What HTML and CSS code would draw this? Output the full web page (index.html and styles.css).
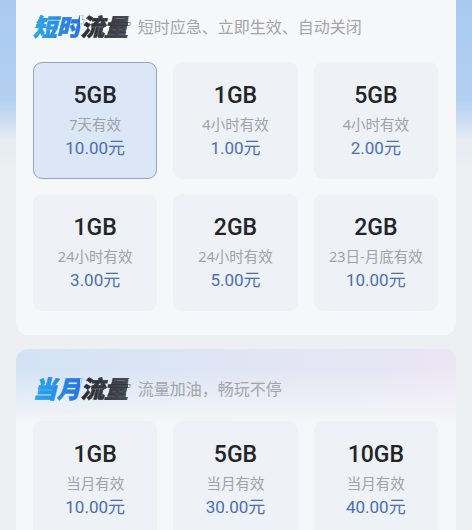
FILE: index.html
```html
<!DOCTYPE html>
<html>
	<head>
		<meta charset="utf-8">
		<meta name="viewport" content="width=device-width, initial-scale=1.0">
		<title>流量包</title>
		<link rel="stylesheet" href="styles.css">
	</head>
	<body>
		<div class="page">
			<section class="panel panel-short">
				<div class="panel-head">
					<h2 class="panel-title"><span class="accent">短时</span><span class="dark">流量</span></h2>
					<p class="panel-desc">短时应急、立即生效、自动关闭</p>
				</div>
				<div class="grid">
					<div class="tile selected">
						<div class="size">5GB</div>
						<div class="valid">7天有效</div>
						<div class="price">10.00元</div>
					</div>
					<div class="tile">
						<div class="size">1GB</div>
						<div class="valid">4小时有效</div>
						<div class="price">1.00元</div>
					</div>
					<div class="tile">
						<div class="size">5GB</div>
						<div class="valid">4小时有效</div>
						<div class="price">2.00元</div>
					</div>
					<div class="tile">
						<div class="size">1GB</div>
						<div class="valid">24小时有效</div>
						<div class="price">3.00元</div>
					</div>
					<div class="tile">
						<div class="size">2GB</div>
						<div class="valid">24小时有效</div>
						<div class="price">5.00元</div>
					</div>
					<div class="tile">
						<div class="size">2GB</div>
						<div class="valid">23日-月底有效</div>
						<div class="price">10.00元</div>
					</div>
				</div>
			</section>

			<section class="panel panel-month">
				<div class="panel-head">
					<h2 class="panel-title"><span class="accent">当月</span><span class="dark">流量</span></h2>
					<p class="panel-desc">流量加油，畅玩不停</p>
				</div>
				<div class="grid">
					<div class="tile">
						<div class="size">1GB</div>
						<div class="valid">当月有效</div>
						<div class="price">10.00元</div>
					</div>
					<div class="tile">
						<div class="size">5GB</div>
						<div class="valid">当月有效</div>
						<div class="price">30.00元</div>
					</div>
					<div class="tile">
						<div class="size">10GB</div>
						<div class="valid">当月有效</div>
						<div class="price">40.00元</div>
					</div>
				</div>
			</section>
		</div>
	</body>
</html>
```

FILE: styles.css
```css
html, body {
	margin: 0;
	padding: 0;
}
body {
	background: linear-gradient(180deg, #a9c9f0 0px, #b3d0f2 100px, #e6ebf3 140px, #eeeff2 170px, #eeeff2 100%);
	font-family: "Noto Sans", "Noto Sans CJK SC", sans-serif;
	overflow: hidden;
}

.page {
	display: flex;
	flex-direction: column;
	gap: 14px;
	padding: 0 16px;
	margin-top: -12px;
}

.panel {
	border-radius: 12px;
	background: #f6f7f8;
	padding: 24px 18px 24px 17px;
}
.panel-month {
	padding-top: 25px;
	background:
		linear-gradient(180deg, rgba(246,247,248,0) 0px, rgba(246,247,248,0) 20px, #f5f6f8 75px),
		linear-gradient(90deg, #d2e3f5 0%, #e0e5f4 50%, #ebe6f4 100%);
}

.panel-head {
	display: flex;
	align-items: center;
	gap: 10px;
	height: 30px;
	margin-bottom: 20px;
}
.panel-month .panel-head {
	margin-bottom: 17px;
}
.panel-title {
	margin: 0;
	font-size: 24px;
	font-weight: 900;
	font-style: italic;
	line-height: 30px;
	letter-spacing: -0.3px;
}
.panel-title .accent {
	background: linear-gradient(90deg, #22aee9, #2b6fe2);
	-webkit-background-clip: text;
	background-clip: text;
	color: transparent;
	-webkit-text-stroke: 0.4px #2a8ee6;
}
.panel-title .dark {
	background: linear-gradient(90deg, #25282e, #4a4d55);
	-webkit-background-clip: text;
	background-clip: text;
	color: transparent;
	-webkit-text-stroke: 0.4px #33363c;
}
.panel-desc {
	margin: 0;
	font-size: 16px;
	color: #a3a5aa;
	line-height: 30px;
}

.grid {
	display: grid;
	grid-template-columns: 1fr 1fr 1fr;
	column-gap: 16px;
	row-gap: 15px;
}
.tile {
	display: flex;
	flex-direction: column;
	align-items: center;
	height: 117px;
	box-sizing: border-box;
	padding-top: 19px;
	border: 1px solid transparent;
	border-radius: 9px;
	background: #eef1f5;
}
.tile.selected {
	background: #dbe7f6;
	border-color: #8fa6c6;
}
.size {
	font-family: Roboto, "Noto Sans", sans-serif;
	font-size: 23px;
	font-weight: 500;
	color: #222428;
	line-height: 28px;
}
.valid {
	margin-top: 4px;
	font-size: 14.5px;
	color: #a0a2a7;
	line-height: 20px;
}
.price {
	margin-top: 2px;
	font-family: Roboto, "Noto Sans CJK SC", sans-serif;
	font-size: 17px;
	color: #4a6fb0;
	line-height: 24px;
}
```
